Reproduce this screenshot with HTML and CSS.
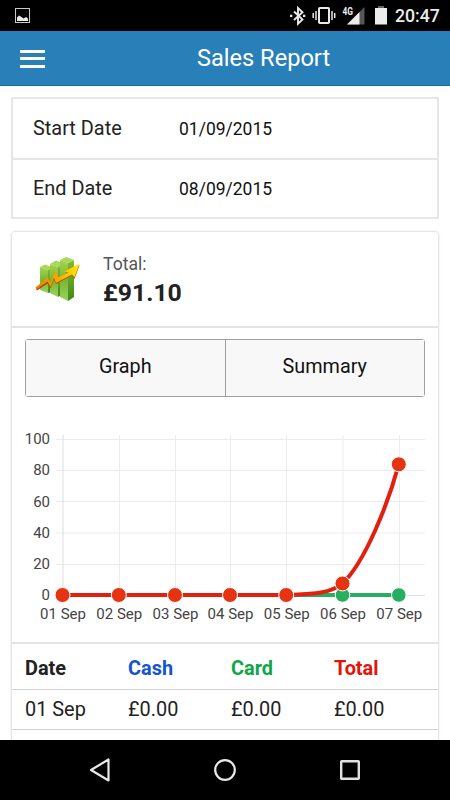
FILE: index.html
```html
<!DOCTYPE html>
<html lang="en">
<head>
  <meta charset="UTF-8" />
  <meta name="viewport" content="width=device-width, initial-scale=1.0"/>
  <title>Sales Report</title>
  <link rel="stylesheet" href="styles.css">
</head>
<body>
  <div class="status-bar">
    <svg class="status-image" width="15" height="15" viewBox="0 0 15 15">
      <rect x="0.5" y="0.5" width="14" height="14" fill="none" stroke="#c8c8c8"/>
      <path d="M2 13V9.500l2-2L6.500 9l2 1.500L11 9l2 1.500V13z" fill="#e8e8e8"/>
    </svg>
    <svg class="status-icons" width="104" height="22" viewBox="0 0 104 22">
      <!-- bluetooth -->
      <path d="M4 6.500l8.500 8L8 18.800V3l4.500 4.200L4 15" fill="none" stroke="#e8e8e8" stroke-width="1.900"/>
      <rect x="0" y="9.700" width="2.300" height="2.300" fill="#e8e8e8"/>
      <rect x="13" y="9.700" width="2.300" height="2.300" fill="#e8e8e8"/>
      <!-- vibrate -->
      <rect x="29" y="3" width="10" height="15" rx="0.800" fill="none" stroke="#e8e8e8" stroke-width="2"/>
      <path d="M23.200 8v5M26 6v9M42 6v9M44.700 8v5" stroke="#e8e8e8" stroke-width="1.500"/>
      <!-- signal -->
      <path d="M57 19.500L74.500 2v17.500z" fill="#555"/>
      <path d="M57 19.500L69.500 7V19.500z" fill="#ececec"/>
      <text class="network" x="52.500" y="10" textLength="10.500" lengthAdjust="spacingAndGlyphs">4G</text>
      <!-- battery -->
      <rect x="88" y="1" width="6" height="2.500" fill="#666"/>
      <rect x="85" y="3" width="12" height="16.500" fill="#ececec"/>
    </svg>
    <span class="clock">20:47</span>
  </div>

  <header class="header">
    <div class="menu">
      <span></span>
      <span></span>
      <span></span>
    </div>
    <h1>Sales Report</h1>
  </header>

  <main class="content">
    <div class="dates">
      <div class="date-row">
        <label>Start Date</label>
        <span>01/09/2015</span>
      </div>
      <div class="date-row">
        <label>End Date</label>
        <span>08/09/2015</span>
      </div>
    </div>

    <div class="card">
      <div class="total">
        <svg width="46" height="46" viewBox="0 0 46 46">
          <defs>
            <linearGradient id="front" x1="0" y1="0" x2="0" y2="1">
              <stop offset="0" stop-color="#a4d350"/>
              <stop offset="0.500" stop-color="#79b832"/>
              <stop offset="1" stop-color="#9bd060"/>
            </linearGradient>
            <linearGradient id="side" x1="0" y1="0" x2="0" y2="1">
              <stop offset="0" stop-color="#83bd32"/>
              <stop offset="1" stop-color="#3e8913"/>
            </linearGradient>
            <linearGradient id="arrow" x1="0" y1="0" x2="1" y2="0">
              <stop offset="0" stop-color="#f27b00"/>
              <stop offset="0.600" stop-color="#ffb000"/>
              <stop offset="1" stop-color="#fff000"/>
            </linearGradient>
          </defs>
          <path d="M5 11l8 3v23l-8-3z" fill="url(#front)"/>
          <path d="M13 14l3-2v24l-3 1z" fill="url(#side)"/>
          <path d="M5 11l5-2.500 8 3-5 2.500z" fill="#a8d956"/>
          <path d="M15 8l8 3v30l-8-4z" fill="url(#front)"/>
          <path d="M23 11l3-2v30l-3 2z" fill="url(#side)"/>
          <path d="M15 8l6-3.500 7 3-5 3.500z" fill="#a8d956"/>
          <path d="M25 4l8 3v38l-8-4z" fill="url(#front)"/>
          <path d="M33 7l6-3v37l-6 4z" fill="url(#side)"/>
          <path d="M25 4l6-3 8 3-6 3z" fill="#a8d956"/>
          <path d="M1 32.500L13 22.500l2.500 6 5-13 2.500 7 11-4.500-4-2L44.500 9 39.500 23l-2.500-3.500-16 8.500-2-4.500-3.500 9-3-5L2 34.500z" fill="#a84700"/>
          <path d="M0.500 31.500L13 21.300l2.500 6 5-13 2.500 7L33.500 17 29 15.500 44.500 7.800 39.500 21.500l-2.500-3L21 27l-2-5-3.500 9-3-5.500L1.500 33.500z" fill="url(#arrow)"/>
        </svg>
        <div class="total-text">
          <span>Total:</span>
          <strong>£91.10</strong>
        </div>
      </div>

      <div class="chart-section">
        <div class="tabs">
          <button type="button">Graph</button>
          <button type="button">Summary</button>
        </div>
        <svg class="chart" width="400" height="200" viewBox="25 430 400 200">
          <path class="grid" d="M56 439.500H425M56 470.500H425M56 501.500H425M56 533H425M56 564.500H425M119.500 435V601M175.500 435V601M230.500 435V601M286.500 435V601M343 435V601M399.500 435V601"/>
          <path class="axis" d="M63 435V601M56 595.500H425"/>
          <g class="labels y-labels">
            <text x="50" y="444">100</text>
            <text x="50" y="475">80</text>
            <text x="50" y="506.500">60</text>
            <text x="50" y="538">40</text>
            <text x="50" y="569">20</text>
            <text x="50" y="600">0</text>
          </g>
          <g class="labels x-labels">
            <text x="63" y="619">01 Sep</text>
            <text x="119.300" y="619">02 Sep</text>
            <text x="175.500" y="619">03 Sep</text>
            <text x="230.500" y="619">04 Sep</text>
            <text x="286.800" y="619">05 Sep</text>
            <text x="343" y="619">06 Sep</text>
            <text x="399.300" y="619">07 Sep</text>
          </g>
          <path class="line card-line" d="M63 595H399"/>
          <g class="points card-points">
            <circle cx="342.500" cy="595" r="7.300"/>
            <circle cx="398.800" cy="595" r="7.300"/>
          </g>
          <path class="line total-line" d="M63 595H286.500C309 594 329 594.500 342.500 583.500C365 562 388 504 398.800 464.300"/>
          <g class="points total-points">
            <circle cx="62.500" cy="595" r="7.500"/>
            <circle cx="118.800" cy="595" r="7.500"/>
            <circle cx="175" cy="595" r="7.500"/>
            <circle cx="230" cy="595" r="7.500"/>
            <circle cx="286.200" cy="595" r="7.500"/>
            <circle cx="342.500" cy="583.500" r="7.500"/>
            <circle cx="398.800" cy="464.300" r="7.500"/>
          </g>
        </svg>
      </div>

      <div class="table">
        <div class="row head">
          <span>Date</span>
          <span class="cash">Cash</span>
          <span class="card-col">Card</span>
          <span class="total-col">Total</span>
        </div>
        <div class="row">
          <span>01 Sep</span>
          <span>£0.00</span>
          <span>£0.00</span>
          <span>£0.00</span>
        </div>
      </div>
    </div>
  </main>

  <nav class="nav-bar">
    <svg width="24" height="26" viewBox="0 0 24 26">
      <path d="M20.500 2.500V23.500L3 13z" fill="none" stroke="#e8e8e8" stroke-width="2.200" stroke-linejoin="round"/>
    </svg>
    <svg width="24" height="24" viewBox="0 0 24 24">
      <circle cx="12" cy="12" r="9.800" fill="none" stroke="#e8e8e8" stroke-width="2.200"/>
    </svg>
    <svg width="24" height="24" viewBox="0 0 24 24">
      <rect x="3.200" y="3.200" width="17.600" height="17.600" rx="0.500" fill="none" stroke="#e0e0e0" stroke-width="2.400"/>
    </svg>
  </nav>
</body>
</html>
```

FILE: styles.css
```css
* {
  box-sizing: border-box;
}
body {
  margin: 0;
  width: 450px;
  height: 800px;
  overflow: hidden;
  display: flex;
  flex-direction: column;
  font-family: Roboto, Arial, sans-serif;
  font-size: 20px;
  color: #222222;
  background-color: #ffffff;
}
.status-bar {
  flex: none;
  display: flex;
  align-items: flex-start;
  height: 31px;
  padding: 5px 8px 0 15px;
  background-color: #000000;
}
.status-image {
  margin-top: 3px;
}
.status-icons {
  margin-left: 260px;
}
.network {
  font-size: 10px;
  font-weight: 700;
  fill: #ececec;
}
.clock {
  margin-left: 1px;
  font-size: 17.7px;
  line-height: 23px;
  font-weight: 500;
  color: #ececec;
}
.header {
  flex: none;
  display: flex;
  align-items: center;
  height: 55px;
  padding-left: 20px;
  background-color: #2980b9;
  border-bottom: 1px solid #1070ae;
}
.menu {
  display: flex;
  flex-direction: column;
  gap: 4.5px;
  width: 25px;
  margin-top: 1px;
}
.menu span {
  height: 3px;
  background-color: #ffffff;
}
h1 {
  margin: 0 0 0 152px;
  font-size: 23.6px;
  font-weight: 400;
  color: #ffffff;
}
.content {
  flex: 1;
  min-height: 0;
  overflow: hidden;
  padding: 11px 11px 0;
}
.dates {
  border: 2px solid #e6e6e6;
}
.date-row {
  display: flex;
  align-items: center;
  height: 59px;
  padding-left: 20px;
}
.date-row + .date-row {
  border-top: 2px solid #e6e6e6;
}
.date-row label {
  width: 146px;
  font-size: 19.9px;
}
.date-row span {
  font-size: 17.5px;
  color: #111111;
}
.card {
  height: 600px;
  margin: 13px 1px 0;
  border-radius: 3px;
  box-shadow: 0 0 3px rgba(0, 0, 0, 0.28);
}
.total {
  display: flex;
  align-items: flex-start;
  height: 96px;
  padding: 24px 0 0 23px;
  border-bottom: 2px solid #e3e3e3;
}
.total-text {
  display: flex;
  flex-direction: column;
  margin-left: 22px;
}
.total-text span {
  font-size: 17.6px;
  line-height: 16px;
  color: #555555;
}
.total-text strong {
  margin-top: 6px;
  font-size: 24.8px;
  line-height: 29px;
}
.chart-section {
  height: 316px;
  padding: 11px 13px 0;
  border-bottom: 2px solid #e3e3e3;
}
.tabs {
  display: flex;
  height: 58px;
  border: 1px solid #a0a0a0;
  border-radius: 3px;
}
.tabs button {
  flex: 1;
  padding: 0 0 4px;
  border: none;
  background-color: #f8f8f8;
  font-family: inherit;
  font-size: 19.8px;
  color: #111111;
}
.tabs button + button {
  border-left: 1px solid #a0a0a0;
}
.chart {
  display: block;
  margin-top: 33px;
}
.grid {
  fill: none;
  stroke: #ececec;
}
.axis {
  fill: none;
  stroke: #dedede;
}
.labels {
  font-size: 15px;
  fill: #444444;
}
.y-labels {
  text-anchor: end;
}
.x-labels {
  text-anchor: middle;
}
.line {
  fill: none;
  stroke-width: 4;
}
.card-line {
  stroke: #27ae60;
}
.total-line {
  stroke: #e32010;
}
.points {
  stroke: #ffffff;
  stroke-width: 1;
}
.card-points {
  fill: #27ae60;
}
.total-points {
  fill: #e63312;
}
.row {
  display: grid;
  grid-template-columns: 103px 103px 103px 1fr;
  align-items: center;
  height: 40px;
  padding: 0 0 1px 13px;
  border-bottom: 1px solid #d2d2d2;
  font-size: 19.9px;
}
.head {
  height: 46px;
  padding-top: 4px;
  font-weight: 700;
}
.cash {
  color: #1554d1;
}
.card-col {
  color: #10a64a;
}
.total-col {
  color: #e31507;
}
.nav-bar {
  flex: none;
  display: flex;
  align-items: center;
  justify-content: center;
  gap: 101px;
  height: 60px;
  background-color: #000000;
}
```
